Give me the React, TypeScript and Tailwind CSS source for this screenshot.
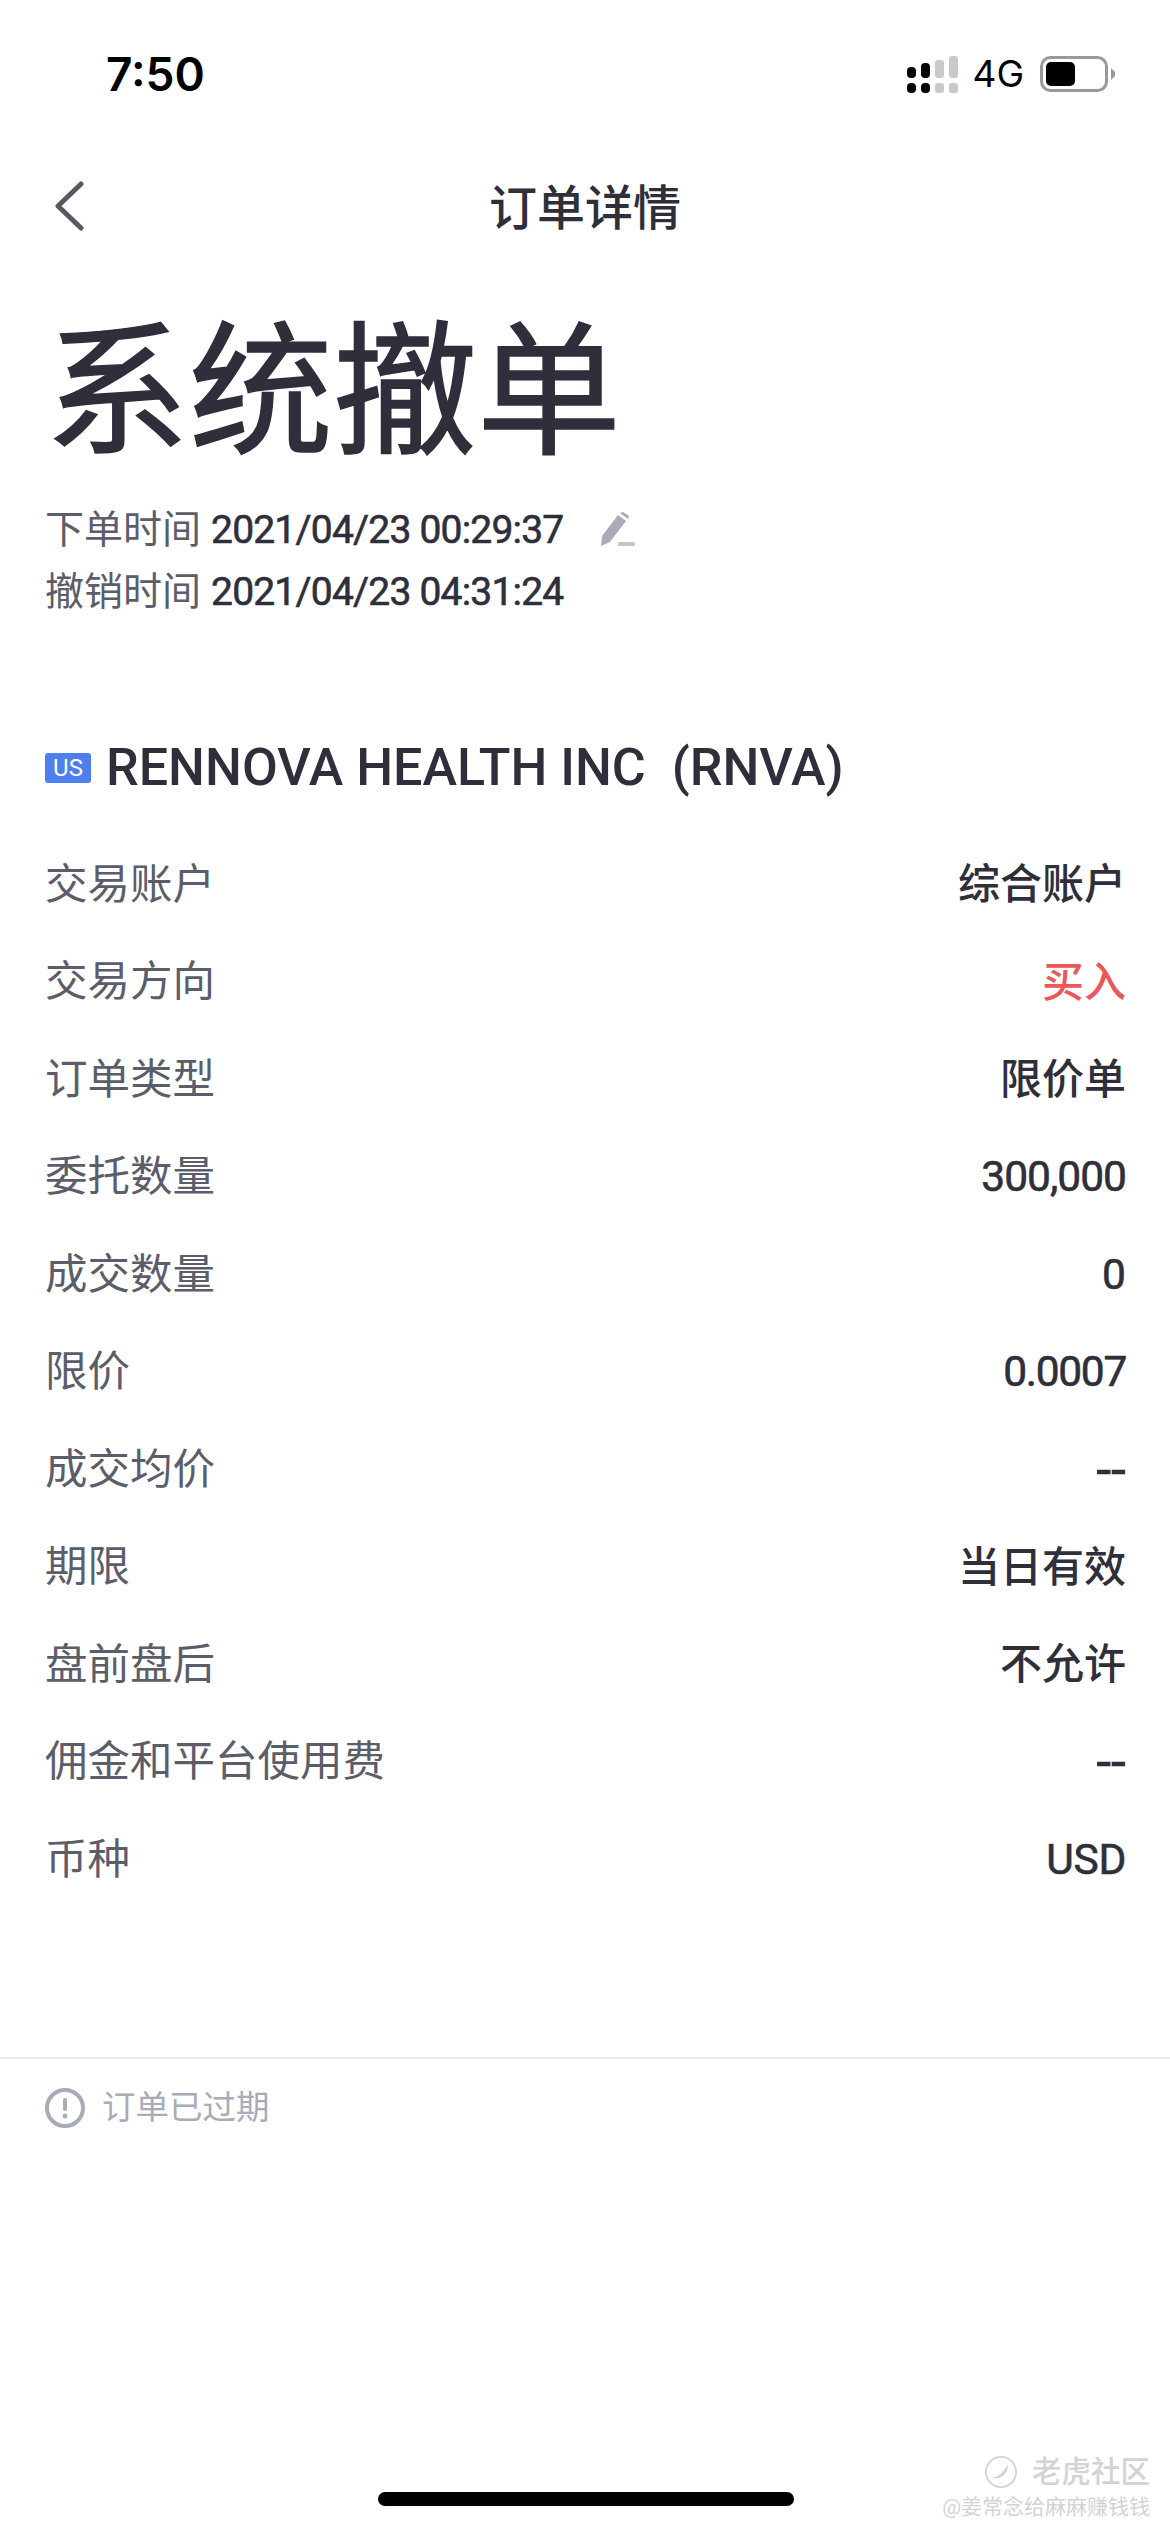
const cjk = '"Roboto", "Noto Sans CJK SC", sans-serif'

const digits = '[-webkit-text-stroke:0.6px_#2e2f3b]'

const rows: { label: string; value: string; className?: string }[] = [
  { label: '交易账户', value: '综合账户', className: 'text-[42px] font-medium' },
  { label: '交易方向', value: '买入', className: 'text-[42px] font-medium text-[#e9585a]' },
  { label: '订单类型', value: '限价单', className: 'text-[42px] font-medium' },
  { label: '委托数量', value: '300,000', className: `tracking-[-1px] ${digits}` },
  { label: '成交数量', value: '0', className: digits },
  { label: '限价', value: '0.0007', className: `tracking-[-1.3px] ${digits}` },
  { label: '成交均价', value: '--', className: `text-[54px] leading-none ${digits}` },
  { label: '期限', value: '当日有效', className: 'text-[42px] font-medium' },
  { label: '盘前盘后', value: '不允许', className: 'text-[42px] font-medium' },
  { label: '佣金和平台使用费', value: '--', className: `text-[54px] leading-none ${digits}` },
  { label: '币种', value: 'USD', className: `tracking-[-0.3px] ${digits}` },
]

function SignalIcon() {
  return (
    <svg width="51" height="37" viewBox="0 0 51 37">
      <rect x="0" y="11" width="9" height="11" rx="4" fill="#000" />
      <rect x="14" y="7" width="9" height="15" rx="4" fill="#000" />
      <rect x="28" y="4" width="9" height="18" rx="3" fill="#c9c9c9" />
      <rect x="42" y="0" width="9" height="22" rx="3" fill="#c9c9c9" />
      <rect x="0" y="27" width="9" height="10" rx="4" fill="#000" />
      <rect x="14" y="27" width="9" height="10" rx="4" fill="#000" />
      <rect x="28" y="27" width="9" height="10" rx="3" fill="#c9c9c9" />
      <rect x="42" y="27" width="9" height="10" rx="3" fill="#c9c9c9" />
    </svg>
  )
}

function BatteryIcon() {
  return (
    <svg width="75" height="36" viewBox="0 0 75 36">
      <rect x="1.5" y="1.5" width="65" height="33" rx="9" fill="none" stroke="#999" strokeWidth="3" />
      <rect x="6" y="6" width="29" height="24" rx="5" fill="#000" />
      <path d="M71 12 L75 16 V20 L71 24 Z" fill="#999" />
    </svg>
  )
}

function PenIcon() {
  return (
    <svg width="36" height="36" viewBox="0 0 36 36">
      <path d="M2 34 L3 24 L19 3 L27 9 L11 30 Z" fill="#a9abb9" />
      <path d="M21 1 L24 0 L30 4 L29 7 Z" fill="#a9abb9" />
      <rect x="19" y="30" width="17" height="4" rx="1.5" fill="#c4c5d0" />
    </svg>
  )
}

export default function App() {
  return (
    <div
      className="relative h-[2532px] w-[1170px] overflow-hidden bg-white text-[#2e2f3b]"
      style={{ fontFamily: cjk }}
    >
      {/* Status bar */}
      <div className="flex h-[148px] items-center justify-between pl-[106px] pr-[55px]">
        <span className="font-['Inter'] text-[46px] font-semibold text-black">7:50</span>
        <div className="flex items-center">
          <SignalIcon />
          <span className="ml-[14px] mr-[16px] font-['Inter'] text-[37px] text-black">4G</span>
          <BatteryIcon />
        </div>
      </div>

      {/* Nav */}
      <div className="relative flex h-[116px] items-center justify-center pt-[5px]">
        <svg className="absolute left-[54px] top-[33px]" width="30" height="50" viewBox="0 0 30 50">
          <path d="M27 3 L4 25 L27 47" fill="none" stroke="#565866" strokeWidth="5" strokeLinecap="round" strokeLinejoin="round" />
        </svg>
        <span className="text-[48px] font-medium leading-none">订单详情</span>
      </div>

      {/* Status and times */}
      <div className="pl-[45px] pr-[44px]">
        <h1 className="mt-[40px] text-[144px] font-normal leading-[180px] [-webkit-text-stroke:1.5px_#2e2f3b]">系统撤单</h1>
        <div className="mt-[15px] flex items-center text-[39px] leading-[62px]">
          <span className="text-[#5b5d6b]">下单时间</span>
          <span className={`ml-[10px] tracking-[-0.8px] ${digits}`}>2021/04/23 00:29:37</span>
          <span className="ml-[36px]"><PenIcon /></span>
        </div>
        <div className="flex items-center text-[39px] leading-[62px]">
          <span className="text-[#5b5d6b]">撤销时间</span>
          <span className={`ml-[10px] tracking-[-0.8px] ${digits}`}>2021/04/23 04:31:24</span>
        </div>

        {/* Instrument name */}
        <div className="mt-[110px] flex items-center">
          <span className="flex h-[30px] w-[46px] items-center justify-center rounded-[3px] bg-[#4f7fee] text-[24px] leading-none text-white">US</span>
          <span className="ml-[15px] whitespace-pre text-[52px] font-medium leading-[70px]">RENNOVA HEALTH INC  (RNVA)</span>
        </div>

        {/* Order fields */}
        <div className="mt-[33px]">
          {rows.map((row) => (
            <div key={row.label} className="flex h-[97.5px] items-center justify-between text-[42.5px]">
              <span className="text-[#5b5d6b]">{row.label}</span>
              <span className={row.className}>{row.value}</span>
            </div>
          ))}
        </div>
      </div>

      {/* Footer note */}
      <div className="mt-[148px] flex items-center border-t-2 border-[#eeeef2] px-[45px] pt-[24px]">
        <svg width="40" height="40" viewBox="0 0 40 40">
          <circle cx="20" cy="20" r="18" fill="none" stroke="#a9abb9" strokeWidth="4" />
          <rect x="18" y="10" width="4" height="13" rx="2" fill="#a9abb9" />
          <circle cx="20" cy="28" r="2.4" fill="#a9abb9" />
        </svg>
        <span className="ml-[17px] text-[33.5px] text-[#a9abb9]">订单已过期</span>
      </div>

      {/* Watermark */}
      <div className="absolute bottom-[12px] right-[20px] flex flex-col items-end text-[#d2d3d6]">
        <div className="flex items-center">
          <svg width="34" height="34" viewBox="0 0 36 36">
            <circle cx="18" cy="18" r="16" fill="none" stroke="#d2d3d6" strokeWidth="2" />
            <path d="M25 10 C27 18 18 27 9 24 C16 23 21 17 25 10 Z" fill="#d2d3d6" />
          </svg>
          <span className="ml-[14px] text-[29.5px] font-medium leading-[44px]">老虎社区</span>
        </div>
        <span className="text-[21px] leading-[26px]">@姜常念给麻麻赚钱钱</span>
      </div>

      {/* Home indicator */}
      <div className="absolute bottom-[26px] left-[378px] h-[14px] w-[416px] rounded-full bg-black" />
    </div>
  )
}
